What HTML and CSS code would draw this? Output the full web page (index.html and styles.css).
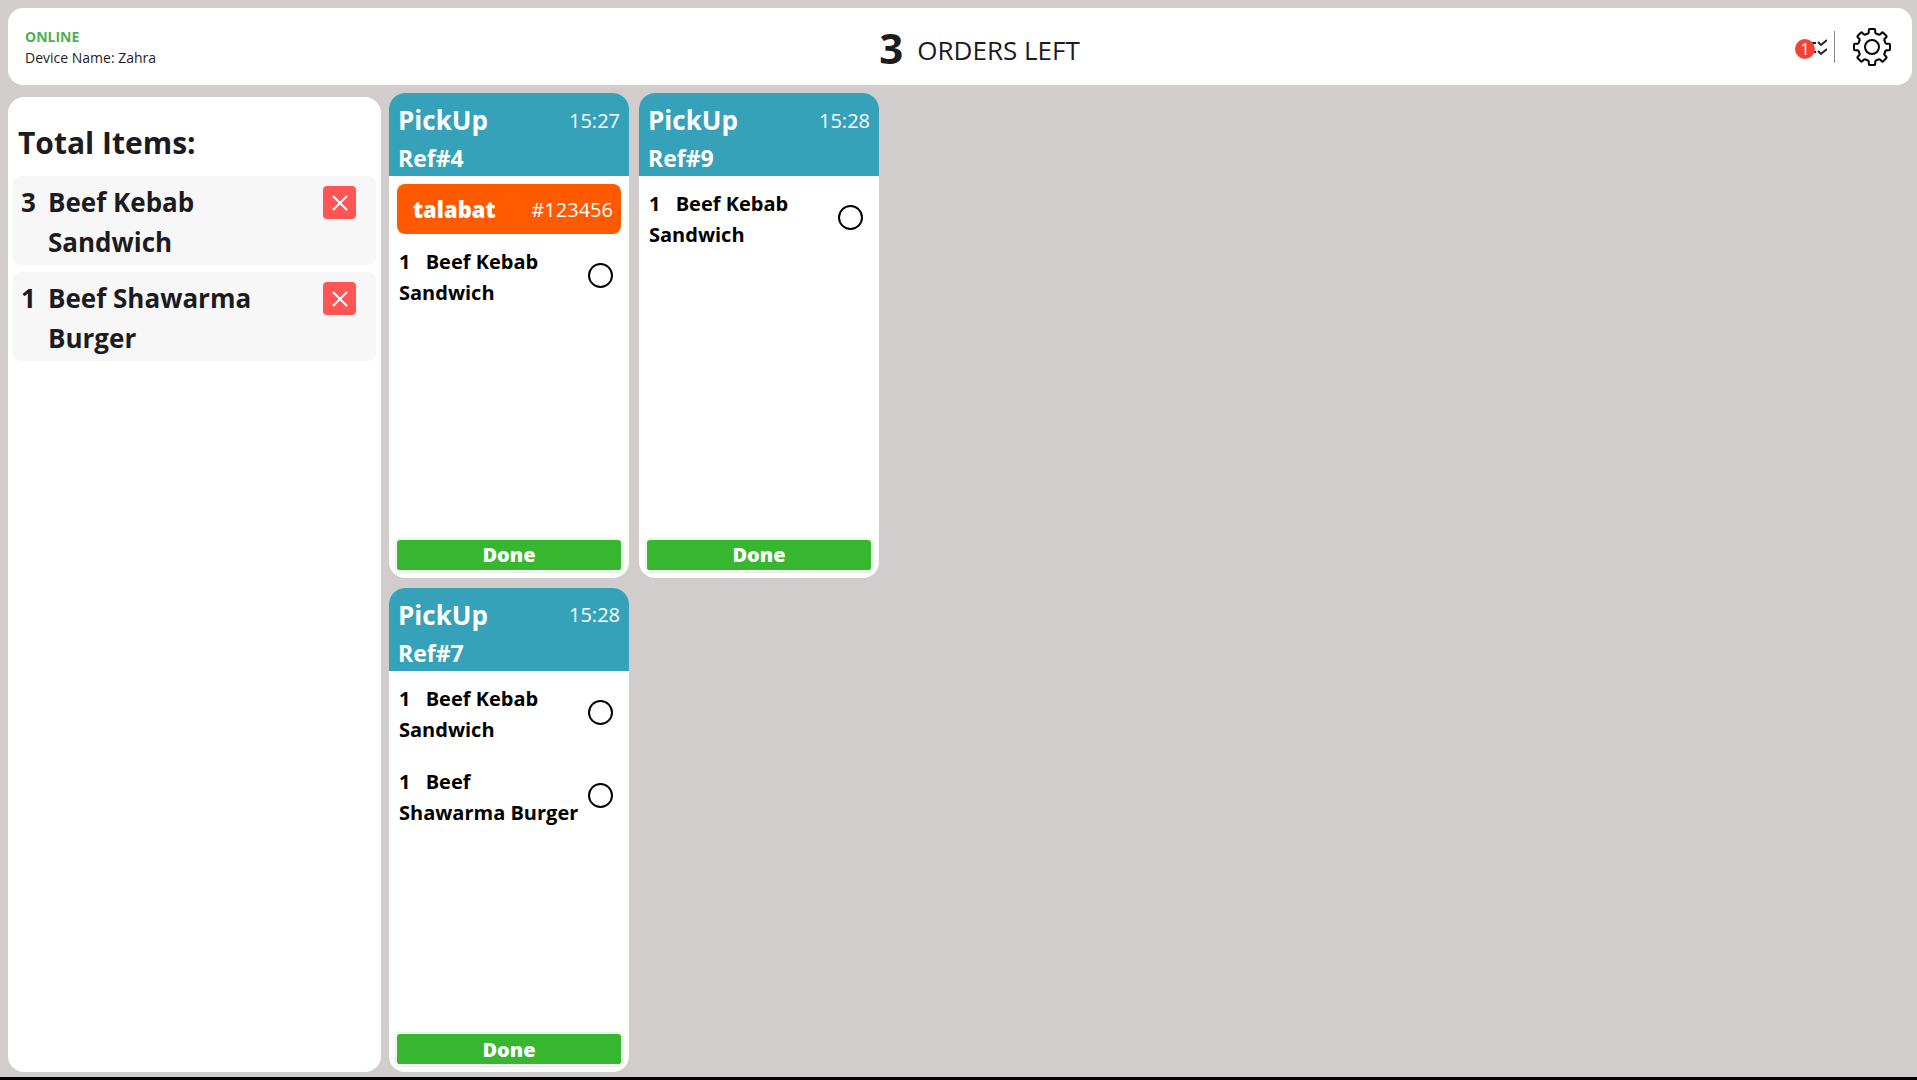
FILE: index.html
```html
<!DOCTYPE html>
<html lang="en">
<head>
    <meta charset="UTF-8">
    <meta name="viewport" content="width=device-width, initial-scale=1.0">
    <title>Kitchen Display</title>
    <link rel="stylesheet" href="styles.css">
</head>
<body>

    <!-- Top bar -->
    <header class="topbar">
        <div class="device">
            <div class="status">ONLINE</div>
            <div>Device Name: Zahra</div>
        </div>
        <h1 class="orders-left"><span class="count">3</span><span class="caption">ORDERS LEFT</span></h1>
        <div class="actions">
            <button class="done-list" aria-label="Done orders">
                <svg width="24" height="24" viewBox="0 0 24 24" fill="none" stroke="#222" stroke-width="2">
                    <path d="M3 8h10M3 17h10"/>
                    <path d="M15 7l3 3 6-5M15 16l3 3 6-5"/>
                </svg>
                <span class="badge">1</span>
            </button>
            <button class="settings" aria-label="Settings">
                <svg width="38" height="38" viewBox="-19 -19 38 38" fill="none" stroke="#000" stroke-width="2" stroke-linejoin="round" stroke-linecap="round">
                    <!-- one tooth, turned eight times -->
                    <path id="tooth" d="M-5.400-12.900Q-3.500-13.200-3.200-14.500V-17Q-3.200-18-2.200-18H2.200Q3.200-18 3.200-17V-14.500Q3.500-13.200 5.400-12.900"/>
                    <use href="#tooth" transform="rotate(45)"/>
                    <use href="#tooth" transform="rotate(90)"/>
                    <use href="#tooth" transform="rotate(135)"/>
                    <use href="#tooth" transform="rotate(180)"/>
                    <use href="#tooth" transform="rotate(225)"/>
                    <use href="#tooth" transform="rotate(270)"/>
                    <use href="#tooth" transform="rotate(315)"/>
                    <circle r="7"/>
                </svg>
            </button>
        </div>
    </header>

    <main class="content">
        <!-- Totals -->
        <aside class="totals">
            <h2>Total Items:</h2>
            <div class="total-row">
                <span class="qty">3</span>
                <span class="name">Beef Kebab Sandwich</span>
                <button class="remove" aria-label="Remove Beef Kebab Sandwich">
                    <svg width="18" height="18" viewBox="0 0 18 18"><path d="M2 2l14 14M16 2L2 16"/></svg>
                </button>
            </div>
            <div class="total-row">
                <span class="qty">1</span>
                <span class="name">Beef Shawarma Burger</span>
                <button class="remove" aria-label="Remove Beef Shawarma Burger">
                    <svg width="18" height="18" viewBox="0 0 18 18"><path d="M2 2l14 14M16 2L2 16"/></svg>
                </button>
            </div>
        </aside>

        <!-- Orders -->
        <section class="orders">
            <article class="order">
                <div class="order-head">
                    <h3>PickUp</h3>
                    <time>15:27</time>
                    <div class="ref">Ref#4</div>
                </div>
                <div class="partner">
                    <span class="partner-logo">talabat</span>
                    <span>#123456</span>
                </div>
                <label class="item">
                    <span>1&nbsp;&ensp;Beef Kebab Sandwich</span>
                    <input type="checkbox">
                </label>
                <button class="done">Done</button>
            </article>

            <article class="order">
                <div class="order-head">
                    <h3>PickUp</h3>
                    <time>15:28</time>
                    <div class="ref">Ref#7</div>
                </div>
                <label class="item">
                    <span>1&nbsp;&ensp;Beef Kebab Sandwich</span>
                    <input type="checkbox">
                </label>
                <label class="item">
                    <span>1&nbsp;&ensp;Beef Shawarma&nbsp;Burger</span>
                    <input type="checkbox">
                </label>
                <button class="done">Done</button>
            </article>

            <article class="order">
                <div class="order-head">
                    <h3>PickUp</h3>
                    <time>15:28</time>
                    <div class="ref">Ref#9</div>
                </div>
                <label class="item">
                    <span>1&nbsp;&ensp;Beef Kebab Sandwich</span>
                    <input type="checkbox">
                </label>
                <button class="done">Done</button>
            </article>
        </section>
    </main>

</body>
</html>
```
FILE: styles.css
```css
* {
    box-sizing: border-box;
}

body {
    display: flex;
    flex-direction: column;
    min-height: 100vh;
    margin: 0;
    padding: 8px 5px 5px 8px;
    border-bottom: 3px solid #000;
    background-color: #d1cdcc;
    color: #1c1b1f;
    font-family: "Segoe UI", "Open Sans", "Noto Sans", sans-serif;
}

h1, h2, h3 {
    margin: 0;
}

button {
    padding: 0;
    border: none;
    background: none;
    font-family: inherit;
    cursor: pointer;
}

/* Top bar */
.topbar {
    display: flex;
    justify-content: space-between;
    align-items: center;
    height: 77px;
    padding: 0 21px 0 17px;
    border-radius: 15px;
    background-color: #fff;
}

.device {
    font-size: 14px;
    line-height: 21px;
}

.status {
    color: #4caf50;
    font-weight: 700;
}

.orders-left {
    display: flex;
    align-items: center;
    gap: 14px;
    padding-top: 2px;
    font-size: 26px;
    font-weight: 400;
    line-height: 60px;
}

.count {
    font-size: 42px;
    font-weight: 700;
}

.caption {
    padding-top: 4px;
}

.actions {
    display: flex;
    align-items: center;
}

.done-list {
    position: relative;
    display: flex;
    align-items: center;
    height: 32px;
    padding: 0 7px 0 0;
    border-right: 1px solid #888;
}

.badge {
    position: absolute;
    left: -8px;
    top: 8px;
    width: 20px;
    height: 20px;
    border-radius: 50%;
    background-color: #f44336;
    color: #fff;
    font-size: 16px;
    line-height: 20px;
}

.settings {
    display: flex;
    margin-left: 18px;
}

/* Totals */
.content {
    display: flex;
    flex: 1;
    gap: 8px;
    margin-top: 8px;
}

.totals {
    flex: none;
    width: 373px;
    margin-top: 4px;
    padding: 24px 5px;
    border-radius: 16px;
    background-color: #fff;
}

.totals h2 {
    padding: 0 5px;
    margin-bottom: 11px;
    font-size: 30px;
    font-weight: 700;
    line-height: 44px;
}

.total-row {
    display: flex;
    align-items: flex-start;
    margin-bottom: 7px;
    padding: 6px 20px 3px 8px;
    border-radius: 8px;
    background-color: #f7f7f7;
    font-size: 26px;
    font-weight: 700;
    line-height: 40px;
}

.qty {
    width: 27px;
}

.name {
    flex: 1;
    max-width: 240px;
}

.remove {
    display: flex;
    align-items: center;
    justify-content: center;
    width: 33px;
    height: 33px;
    margin-top: 4px;
    margin-left: auto;
    border-radius: 4px;
    background-color: #ff5555;
}

.remove path {
    stroke: #fff;
    stroke-width: 2;
}

/* Orders */
.orders {
    display: grid;
    grid-auto-flow: column;
    grid-template-rows: 1fr 1fr;
    grid-auto-columns: 240px;
    gap: 10px;
}

.order {
    display: flex;
    flex-direction: column;
    border-radius: 16px;
    background-color: #fff;
    color: #000;
    overflow: hidden;
}

.order-head {
    display: grid;
    grid-template-columns: 1fr auto;
    align-items: center;
    padding: 7px 9px 0;
    margin-bottom: 8px;
    background-color: #35a2b9;
    color: #fff;
}

.order-head h3 {
    font-size: 26px;
    font-weight: 700;
    line-height: 40px;
}

.order-head time {
    font-size: 20px;
}

.ref {
    font-size: 23px;
    font-weight: 700;
    line-height: 36px;
}

.partner {
    display: flex;
    justify-content: space-between;
    align-items: center;
    height: 50px;
    margin: 0 8px 8px;
    padding: 0 8px 0 16px;
    border-radius: 8px;
    background-color: #ff5a00;
    color: #fff;
    font-size: 20px;
}

.partner-logo {
    font-size: 22px;
    font-weight: 800;
}

.item {
    display: flex;
    justify-content: space-between;
    align-items: center;
    margin-bottom: 17px;
    padding: 4px 16px 0 10px;
    font-size: 20px;
    font-weight: 700;
    line-height: 31px;
}

.item input {
    appearance: none;
    flex: none;
    width: 25px;
    height: 25px;
    margin: 0 0 3px;
    border: 2px solid #000;
    border-radius: 50%;
}

.done {
    height: 35px;
    margin: auto 6px 5px;
    padding: 1px 1px 2px;
    border: 1px solid #e4f2e2;
    border-radius: 5px;
    background: #37b62f content-box;
    color: #fff;
    font-size: 20px;
    font-weight: 800;
    line-height: 29px;
}
```
